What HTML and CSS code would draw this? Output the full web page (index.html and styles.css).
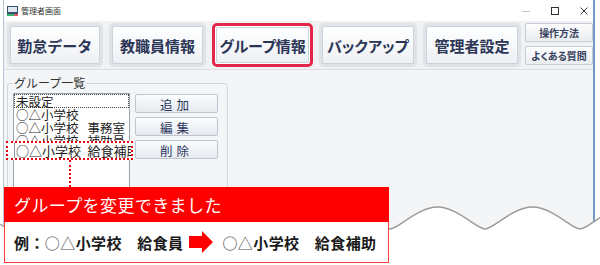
FILE: index.html
```html
<!DOCTYPE html>
<html lang="ja">
<head>
    <meta charset="UTF-8">
    <meta name="viewport" content="width=device-width, initial-scale=1.0">
    <title>管理者画面</title>
    <link rel="stylesheet" href="styles.css">
</head>
<body>
<div class="window">
    <div class="titlebar">
        <svg class="app-icon" width="11" height="10" viewBox="0 0 11 10">
            <rect x="0" y="0" width="11" height="8" fill="#34506e"/>
            <rect x="1" y="1" width="9" height="5" fill="#dfe7ef"/>
            <rect x="0" y="8" width="7" height="2" fill="#3bb36a"/>
            <rect x="7" y="8" width="4" height="2" fill="#e05a5a"/>
        </svg>
        <span class="title">管理者画面</span>
        <div class="controls">
            <svg width="8" height="8" viewBox="0 0 8 8"><path d="M0 4.5h8" stroke="#c4c4c4" stroke-width="1"/></svg>
            <svg width="8" height="8" viewBox="0 0 8 8"><rect x="0.5" y="0.5" width="7" height="7" fill="none" stroke="#333" stroke-width="1"/></svg>
            <svg width="8" height="8" viewBox="0 0 8 8"><path d="M0.5 0.5l7 7M7.5 0.5l-7 7" stroke="#333" stroke-width="1"/></svg>
        </div>
    </div>

    <div class="toolbar">
        <div class="tile tile-kintai"><button class="tile-btn">勤怠データ</button></div>
        <div class="tile tile-staff"><button class="tile-btn">教職員情報</button></div>
        <div class="tile tile-group active"><button class="tile-btn">グループ情報</button></div>
        <div class="tile tile-backup"><button class="tile-btn">バックアップ</button></div>
        <div class="tile tile-admin"><button class="tile-btn">管理者設定</button></div>
        <div class="side">
            <button class="small-btn">操作方法</button>
            <button class="small-btn">よくある質問</button>
        </div>
    </div>

    <div class="content">
        <fieldset class="group">
            <legend>グループ一覧</legend>
            <ul class="listbox">
                <li class="focused">未設定</li>
                <li>○△小学校</li>
                <li>○△小学校&ensp; 事務室</li>
                <li>○△小学校&ensp; 補助員</li>
                <li>○△小学校&ensp; 給食補助</li>
            </ul>
            <div class="actions">
                <button class="act-btn">追加</button>
                <button class="act-btn">編集</button>
                <button class="act-btn">削除</button>
            </div>
        </fieldset>
    </div>
</div>

<!-- torn edge under the window -->
<svg class="tear" width="600" height="70" viewBox="0 195 600 70">
    <path fill="#fff" d="M -85 229 C -77 229, -57 207, -37.5 207 C -18 207, 2 229, 10 229 C 18 229, 38 207, 57.5 207 C 77 207, 97 229, 105 229 C 113 229, 133 207, 152.5 207 C 172 207, 192 229, 200 229 C 208 229, 228 207, 247.5 207 C 267 207, 287 229, 295 229 C 303 229, 323 207, 342.5 207 C 362 207, 382 229, 390 229 C 398 229, 418 207, 437.5 207 C 457 207, 477 229, 485 229 C 493 229, 513 207, 532.5 207 C 552 207, 572 229, 580 229 C 588 229, 608 207, 627.5 207 L 700 300 L -100 300 Z"/>
    <path fill="none" stroke="#9a9a9a" stroke-width="1.4" d="M -85 229 C -77 229, -57 207, -37.5 207 C -18 207, 2 229, 10 229 C 18 229, 38 207, 57.5 207 C 77 207, 97 229, 105 229 C 113 229, 133 207, 152.5 207 C 172 207, 192 229, 200 229 C 208 229, 228 207, 247.5 207 C 267 207, 287 229, 295 229 C 303 229, 323 207, 342.5 207 C 362 207, 382 229, 390 229 C 398 229, 418 207, 437.5 207 C 457 207, 477 229, 485 229 C 493 229, 513 207, 532.5 207 C 552 207, 572 229, 580 229 C 588 229, 608 207, 627.5 207"/>
</svg>

<div class="zoom-row"><span>○△小学校&ensp;給食補助</span></div>
<div class="zoom-line"></div>

<div class="notice">
    <div class="notice-head">グループを変更できました</div>
    <div class="notice-body">
        <span>例：</span><span class="mark">○△</span><span>小学校　給食員</span>
        <svg class="arrow" width="24" height="22" viewBox="0 0 24 22">
            <polygon points="0,5 13,5 13,0 24,11 13,22 13,17 0,17" fill="#ff0000"/>
        </svg>
        <span class="mark">○△</span><span>小学校　給食補助</span>
    </div>
</div>
</body>
</html>
```

FILE: styles.css
```css
* {
    box-sizing: border-box;
}
body {
    margin: 0;
    width: 600px;
    height: 265px;
    overflow: hidden;
    position: relative;
    background: #fff;
    font-family: "Noto Sans CJK JP", "Noto Sans", sans-serif;
    color: #222;
}
button {
    font-family: "Noto Sans CJK JP", "Noto Sans", sans-serif;
    padding: 0;
    cursor: pointer;
}

/* window frame */
.window {
    margin-left: 3px;
    width: 592px;
    height: 240px;
    overflow: hidden;
    border-left: 1px solid #b9c6d4;
    border-right: 2px solid #7398c4;
    display: flex;
    flex-direction: column;
}
.titlebar {
    height: 21px;
    flex: none;
    background: #fff;
    display: flex;
    align-items: center;
    padding-left: 3px;
}
.app-icon {
    margin-right: 3px;
}
.title {
    font-size: 8px;
    line-height: 1;
    color: #333;
}
.controls {
    margin-left: auto;
    display: flex;
    align-items: center;
    gap: 21px;
    padding-right: 5px;
}

/* big menu buttons */
.toolbar {
    height: 48px;
    flex: none;
    background: #f0f1f3;
    display: flex;
    gap: 6px;
    padding: 2px 0 0 3px;
}
.tile {
    height: 44px;
    padding: 3px;
    border-radius: 5px;
    background: #dfe3e8;
}
.tile-kintai { width: 96px; }
.tile-staff { width: 98px; }
.tile-group { width: 101px; }
.tile-backup { width: 98px; }
.tile-admin { width: 99px; }
.tile.active {
    background: #fff;
    border: 3px solid #e2274b;
    padding: 1px;
}
.tile-btn {
    width: 100%;
    height: 100%;
    border: 1px solid #cdd3db;
    border-radius: 2px;
    background: linear-gradient(#ffffff, #edf0f4);
    font-size: 15px;
    font-weight: bold;
    color: #2b3555;
    white-space: nowrap;
}
.tile-group .tile-btn,
.tile-backup .tile-btn {
    font-feature-settings: "palt";
}
.side {
    width: 68px;
    margin-left: -2px;
    display: flex;
    flex-direction: column;
    gap: 4px;
}
.small-btn {
    height: 19px;
    border: 1px solid #c5ccd6;
    border-radius: 2px;
    background: linear-gradient(#fdfdfe, #e9ecf0);
    font-size: 10px;
    font-weight: bold;
    font-feature-settings: "palt";
    color: #39435f;
    white-space: nowrap;
}

/* group list */
.content {
    flex: 1;
    background: #f4f5f7;
    border-top: 1px solid #dadee3;
    padding: 6px 0 0 3px;
}
.group {
    margin: 0;
    width: 221px;
    height: 160px;
    padding: 3px 8px 0 5px;
    border: 1px solid #d3d8de;
    border-radius: 3px;
    display: flex;
    align-items: flex-start;
    gap: 5px;
}
.group legend {
    padding: 0 1px;
    font-size: 12px;
    line-height: 14px;
    color: #333;
}
.listbox {
    list-style: none;
    margin: 0;
    padding: 0;
    width: 117px;
    height: 150px;
    background: #fff;
    border: 1px solid #98a2ae;
    font-size: 12.5px;
    line-height: 13px;
    white-space: nowrap;
    overflow: hidden;
}
.listbox li {
    height: 13px;
    padding-left: 2px;
}
.listbox li.focused {
    height: 14px;
    border: 1px dotted #444;
    padding-left: 1px;
}
.actions {
    width: 83px;
    padding-top: 1px;
    display: flex;
    flex-direction: column;
    gap: 4px;
}
.act-btn {
    height: 19px;
    border: 1px solid #bcc5d0;
    border-radius: 2px;
    background: linear-gradient(#fbfcfd, #e6eaef);
    font-size: 12.5px;
    letter-spacing: 4px;
    color: #2b3660;
}

/* torn edge */
.tear {
    position: absolute;
    left: 0;
    top: 195px;
}

/* annotation marks */
.zoom-row {
    position: absolute;
    left: 6px;
    top: 141px;
    width: 127px;
    height: 19px;
    border: 2px dotted #e50012;
    background: #fff;
    overflow: hidden;
    white-space: nowrap;
}
.zoom-row span {
    display: block;
    margin-left: 6px;
    padding-left: 1px;
    border-left: 1px solid #8d96a2;
    font-size: 13px;
    line-height: 15px;
    color: #222;
}
.zoom-line {
    position: absolute;
    left: 69px;
    top: 160px;
    height: 27px;
    border-left: 2px dotted #e50012;
}
.notice {
    position: absolute;
    left: 4px;
    top: 187px;
    width: 385px;
}
.notice-head {
    height: 35px;
    background: #ff0000;
    color: #fff;
    font-size: 17px;
    letter-spacing: 0.4px;
    line-height: 35px;
    padding-left: 10px;
}
.notice-body {
    height: 41px;
    background: #fff;
    border: 1px solid #ff3b3b;
    border-top: none;
    display: flex;
    align-items: center;
    padding-left: 9px;
    font-size: 15px;
    letter-spacing: 0.4px;
    font-weight: bold;
    color: #1a1a1a;
    white-space: pre;
}
.notice-body .mark {
    font-weight: normal;
    color: #444;
}
.arrow {
    margin: 0 9px 0 6px;
}
```
